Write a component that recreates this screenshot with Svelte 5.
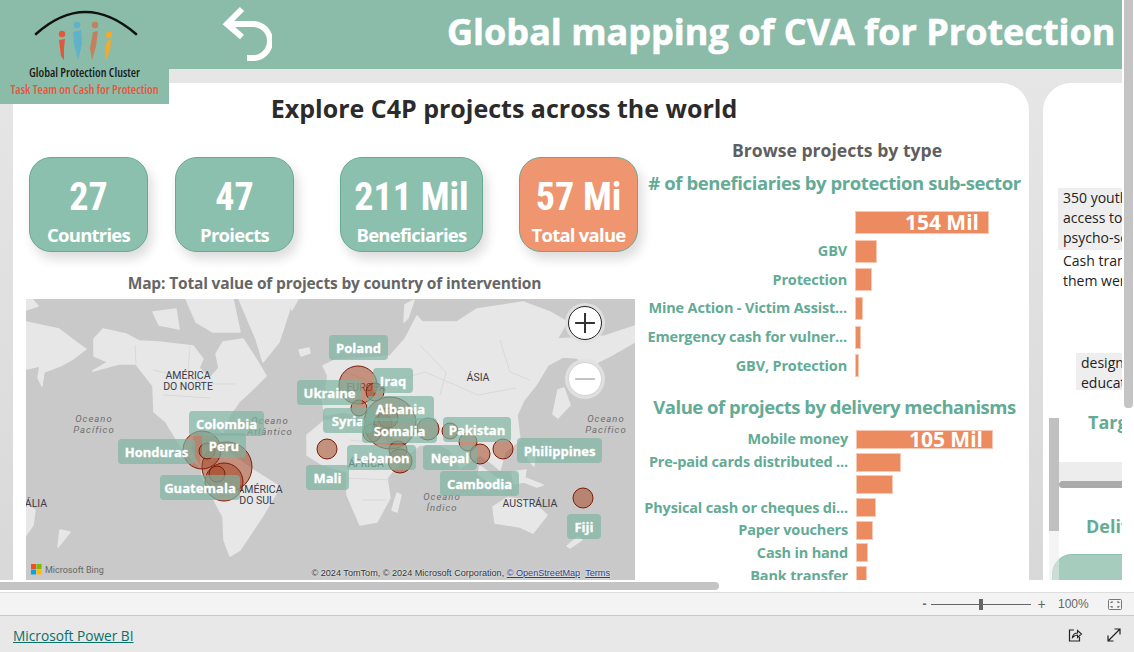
<script>
  const kpis = [
    { value: '27', label: 'Countries', w: 119, ml: 16 },
    { value: '47', label: 'Projects', w: 119, ml: 27, clipped: true },
    { value: '211 Mil', label: 'Beneficiaries', w: 143, ml: 46 },
    { value: '57 Mi', label: 'Total value', w: 119, ml: 36, warm: true }
  ];

  const subSectors = [
    { name: '', w: 132, value: '154 Mil' },
    { name: 'GBV', w: 20 },
    { name: 'Protection', w: 15 },
    { name: 'Mine Action - Victim Assist...', w: 6 },
    { name: 'Emergency cash for vulner...', w: 4 },
    { name: 'GBV, Protection', w: 2 }
  ];

  const mechanisms = [
    { name: 'Mobile money', w: 135, value: '105 Mil' },
    { name: 'Pre-paid cards distributed ...', w: 43 },
    { name: '', w: 35 },
    { name: 'Physical cash or cheques di...', w: 18 },
    { name: 'Paper vouchers', w: 15 },
    { name: 'Cash in hand', w: 10 },
    { name: 'Bank transfer', w: 9 }
  ];

  // page coordinates, the svg viewBox is the map's box
  const bubbles = [
    [227, 467, 25], [202, 450, 19], [207, 451, 8], [224, 482, 19], [217, 474, 8],
    [327, 449, 10], [358, 385, 19], [375, 392, 9], [359, 408, 8], [390, 423, 26],
    [383, 423, 9], [388, 418, 10], [372, 433, 9], [428, 429, 11], [398, 450, 9],
    [400, 461, 12], [450, 431, 8], [468, 442, 9], [480, 454, 10], [503, 449, 10],
    [583, 498, 10]
  ];

  const countries = [
    ['Poland', 329, 335, 59], ['Iraq', 373, 368, 40], ['Ukraine', 297, 380, 65],
    ['Albania', 367, 396, 67], ['Syria', 323, 408, 50], ['Somalia', 362, 418, 75],
    ['Lebanon', 347, 445, 69], ['Nepal', 423, 445, 54], ['Pakistan', 443, 417, 68],
    ['Philippines', 517, 438, 85], ['Cambodia', 440, 471, 79], ['Fiji', 567, 514, 34],
    ['Mali', 306, 465, 43], ['Colombia', 189, 411, 75], ['Peru', 202, 433, 44],
    ['Honduras', 118, 439, 77], ['Guatemala', 160, 475, 80]
  ];

  const places = [
    ['AMÉRICA', 188, 379], ['DO NORTE', 188, 390], ['ÁSIA', 478, 381], ['EUROPA', 366, 391],
    ['ÁFRICA', 366, 467], ['AUSTRÁLIA', 530, 507], ['AMÉRICA', 260, 493], ['DO SUL', 257, 504],
    ['ÁLIA', 36, 507]
  ];

  const oceans = [
    ['Oceano', 94, 422], ['Pacífico', 94, 433], ['Oceano', 270, 424], ['Atlântico', 270, 435],
    ['Oceano', 442, 500], ['Índico', 442, 511], ['Oceano', 606, 422], ['Pacífico', 606, 433]
  ];

  const land = [
    // north america, hudson bay is cut out below
    'M94 339L103 329L126 334L139 341L159 342L193 346L203 359L199 368L210 378L219 368L216 354L223 342L243 339L256 359L266 376L253 389L239 402L229 416L223 433L217 428L193 433L190 450L200 467L183 450L166 422L154 412L153 386L136 364L119 364L93 371L108 362L94 356Z',
    'M153 312L176 309L179 329L159 325Z',
    'M186 299L233 299L240 332L213 332L196 322Z',
    'M239 299L293 299L279 342L263 362L256 339Z',
    'M26 322L59 329L76 342L86 349L73 359L60 366L44 372L42 386L38 378L40 366L26 369Z',
    'M26 299L32 299L38 306L26 310Z',
    'M202 477L200 447L225 450L253 470L280 487L262 517L240 550L230 556L224 540L223 517Z',
    // eurasia
    'M325 415L322 398L336 392L323 366L335 360L353 359L390 356L405 339L417 316L422 322L457 322L477 309L497 306L523 302L550 312L567 322L557 339L605 336L635 326L635 342L610 356L598 362L590 378L582 368L578 358L563 357L548 365L536 385L524 400L517 415L520 440L505 452L500 470L490 462L480 455L460 468L450 450L440 445L420 445L403 458L395 440L385 430L370 420L345 412Z',
    'M307 435L325 420L370 425L385 440L395 460L403 458L387 478L390 498L377 522L360 525L347 495L347 472L323 465L307 455Z',
    'M493 507L507 498L530 500L547 515L533 533L520 527L495 523Z',
    'M397 493L401 495L397 512L392 510Z',
    'M558 390L564 388L570 405L558 418L553 414Z',
    'M523 477L543 485L537 487L524 482Z',
    'M480 466L510 488L500 490L478 474Z',
    'M512 472L526 470L524 482L514 484Z',
    'M530 448L536 452L534 466L528 460Z',
    'M328 374L334 372L336 390L326 390Z',
    'M299 350L309 348L310 353L301 356Z',
    'M26 505L35 510L33 525L26 535Z',
    'M60 530L70 532L58 547Z',
    'M578 537L582 540L570 548L567 546Z',
    'M405 305L414 300L408 318L404 322Z',
    'M290 299L298 299L292 310Z'
  ];

  const borders = 'M135 345L136 364M153 370L215 384L235 384M190 346L188 372M163 395L210 398M345 372L380 385L425 372L478 395L516 388M420 345L446 372L440 395M500 340L510 372L530 380M350 440L394 445M340 478L395 480M362 500L386 500';
</script>

<div class="app">
  <div class="report">
    <header class="banner">
      <div class="logo">
        <svg class="logo-mark" viewBox="0 0 169 62" width="169" height="62">
          <path d="M36 34Q85 -10 136 34" fill="none" stroke="#111" stroke-width="2.6" stroke-linecap="round" />
          <circle cx="62" cy="34" r="3.2" fill="#e2583a" />
          <path d="M59 40L65 39L64 48L64 60L61 56Z" fill="#e2583a" />
          <circle cx="77" cy="25" r="3.2" fill="#5fb2c9" />
          <path d="M73 32L81 30L82 44L78 60L74 44Z" fill="#5fb2c9" />
          <circle cx="95" cy="25" r="3.2" fill="#c47f5e" />
          <path d="M93 32L98 31L96 46L92 60L90 48Z" fill="#c47f5e" />
          <circle cx="109" cy="35" r="3.2" fill="#f5a92c" />
          <path d="M107 41L111 40L110 50L106 60L105 50Z" fill="#f5a92c" />
        </svg>
        <div class="logo-name">Global Protection Cluster</div>
        <div class="logo-team">Task Team on Cash for Protection</div>
      </div>
      <svg class="back" viewBox="0 0 50 60" width="50" height="60">
        <path d="M20 7L5 22L20 35M5 22H31A17 17 0 0 1 31 56H25" fill="none" stroke="#fff" stroke-width="6" />
      </svg>
      <h1>Global mapping of CVA for Protection</h1>
    </header>

    <div class="canvas">
      <section class="page">
        <h2>Explore C4P projects across the world</h2>
        <div class="cols">
          <div class="col-left">
            <div class="kpis">
              {#each kpis as k}
                <div class="kpi" class:warm={k.warm} style="width:{k.w}px;margin-left:{k.ml}px">
                  <div class="kpi-value">{k.value}</div>
                  <div class="kpi-label" class:clipped={k.clipped}>{k.label}</div>
                </div>
              {/each}
            </div>
            <h3 class="map-title">Map: Total value of projects by country of intervention</h3>
            <div class="map">
              <svg viewBox="26 299 609 281" width="609" height="281">
                <rect x="26" y="299" width="609" height="281" fill="#c9c9c9" />
                {#each land as d}
                  <path {d} fill="#e7e7e7" stroke="#e7e7e7" stroke-width="1.5" stroke-linejoin="round" />
                {/each}
                <path d={borders} fill="none" stroke="#d3d3d3" stroke-width="0.7" />
                {#each places as [t, x, y]}
                  <text class="place" x={x} y={y}>{t}</text>
                {/each}
                {#each oceans as [t, x, y]}
                  <text class="ocean" x={x} y={y}>{t}</text>
                {/each}
                {#each bubbles as [cx, cy, r]}
                  <circle {cx} {cy} {r} fill="#a84a2a" fill-opacity="0.55" stroke="#7a1c08" stroke-width="1" />
                {/each}
              </svg>
              {#each countries as [name, x, y, w]}
                <div class="tag" style="left:{x - 26}px;top:{y - 299}px;width:{w}px">{name}</div>
              {/each}
              <button class="zoom-btn in" aria-label="Zoom in">
                <svg viewBox="0 0 20 20" width="22" height="22"><path d="M10 1V19M1 10H19" stroke="#333" stroke-width="1.8" /></svg>
              </button>
              <button class="zoom-btn out" aria-label="Zoom out">
                <svg viewBox="0 0 20 20" width="22" height="22"><path d="M1 10H19" stroke="#c4c4c4" stroke-width="1.8" /></svg>
              </button>
              <div class="bing">
                <svg viewBox="0 0 11 11" width="11" height="11">
                  <rect width="5" height="5" fill="#f25022" /><rect x="5.5" width="5" height="5" fill="#7fba00" />
                  <rect y="5.5" width="5" height="5" fill="#00a4ef" /><rect x="5.5" y="5.5" width="5" height="5" fill="#ffb900" />
                </svg>
                Microsoft Bing
              </div>
              <div class="attrib">© 2024 TomTom, © 2024 Microsoft Corporation, <u>© OpenStreetMap</u> &nbsp;<u>Terms</u></div>
            </div>
          </div>

          <div class="col-right">
            <h3 class="browse">Browse projects by type</h3>
            <h3 class="chart-title">&#35; of beneficiaries by protection sub-sector</h3>
            <div class="chart sub">
              {#each subSectors as b}
                <div class="row">
                  <span class="row-name">{b.name}</span>
                  <span class="bar" style="width:{b.w}px">{#if b.value}<span class="bar-value">{b.value}</span>{/if}</span>
                </div>
              {/each}
            </div>
            <h3 class="chart-title second">Value of projects by delivery mechanisms</h3>
            <div class="chart mech">
              {#each mechanisms as b}
                <div class="row">
                  <span class="row-name">{b.name}</span>
                  <span class="bar" style="width:{b.w}px">{#if b.value}<span class="bar-value">{b.value}</span>{/if}</span>
                </div>
              {/each}
            </div>
          </div>
        </div>
      </section>

      <section class="page-two">
        <div class="para shaded">350 youth<br />access to<br />psycho-social</div>
        <div class="para">Cash transfer<br />them were</div>
        <div class="para shaded inset">design<br />education</div>
        <div class="side-head target">Target</div>
        <div class="inner-band"></div>
        <div class="inner-bar"></div>
        <div class="side-head deliv">Delivery</div>
        <div class="inner-card"></div>
        <div class="inner-track"><div class="inner-thumb"></div></div>
      </section>
    </div>

    <div class="vscroll"></div>
    <div class="hscroll"><div class="hthumb"></div></div>
  </div>

  <div class="zoombar">
    <span class="z-sign">-</span>
    <span class="slider"><span class="thumb"></span></span>
    <span class="z-sign plus">+</span>
    <span class="z-pct">100%</span>
    <svg viewBox="0 0 14 11" width="14" height="11">
      <rect x="0.5" y="0.5" width="13" height="10" rx="1" fill="none" stroke="#777" />
      <path d="M3 4V3H5M9 3H11V4M11 7V8H9M5 8H3V7" fill="none" stroke="#555" />
    </svg>
  </div>

  <footer class="foot">
    <span class="pbi">Microsoft Power BI</span>
    <span class="foot-icons">
      <svg viewBox="0 0 16 16" width="16" height="16">
        <path d="M7 3H2.5V14H12.5V10" fill="none" stroke="#222" stroke-width="1.2" />
        <path d="M5.5 10.5C6 7.5 8 6 10.5 6V3.5L14.5 7L10.5 10.5V8C8.5 8 7 9 5.5 10.5Z" fill="none" stroke="#222" stroke-width="1.1" />
      </svg>
      <svg viewBox="0 0 16 16" width="16" height="16">
        <path d="M2 14L14 2M8.5 2H14V7.5M2 8.5V14H7.5" fill="none" stroke="#222" stroke-width="1.2" />
      </svg>
    </span>
  </footer>
</div>

<style>
  :global(body) {
    margin: 0;
    overflow: hidden;
  }

  .app {
    width: 1134px;
    height: 652px;
    display: flex;
    flex-direction: column;
    font-family: "Open Sans", "Noto Sans", sans-serif;
  }

  .report {
    position: relative;
    height: 592px;
    overflow: hidden;
    background: #e4e4e4;
  }

  .report::after {
    content: "";
    position: absolute;
    right: 0;
    top: 0;
    width: 12px;
    height: 592px;
    background: #fff;
  }

  .banner {
    position: relative;
    height: 69px;
    display: flex;
    background: #8abca9;
  }

  .logo {
    position: absolute;
    z-index: 2;
    left: 0;
    top: 0;
    width: 169px;
    height: 104px;
    background: #8abca9;
    text-align: center;
  }

  .logo-mark {
    display: block;
  }

  .logo-name {
    margin-top: 4px;
    font-size: 12.2px;
    line-height: 14px;
    font-weight: 600;
    font-stretch: 80%;
    color: #1a1a1a;
    white-space: nowrap;
  }

  .logo-team {
    margin-top: 2px;
    font-size: 12.3px;
    line-height: 15px;
    font-weight: 600;
    font-stretch: 80%;
    color: #e8553b;
    white-space: nowrap;
  }

  .back {
    margin: 2px 0 0 222px;
    flex: none;
  }

  h1 {
    margin: 0 0 0 175px;
    font-size: 36px;
    line-height: 64px;
    font-weight: 700;
    -webkit-text-stroke: 0.6px #fff;
    color: #fff;
    white-space: nowrap;
  }

  .canvas {
    display: flex;
    gap: 14px;
    padding: 14px 0 0 13px;
    background: linear-gradient(#e6e6e6, #d8d8d8);
  }

  .page {
    flex: none;
    width: 1016px;
    height: 509px;
    background: #fff;
    border-radius: 0 28px 0 0;
  }

  h2 {
    margin: 0;
    height: 52px;
    padding: 8px 34px 0 0;
    box-sizing: border-box;
    font-size: 25px;
    line-height: 34px;
    font-weight: 700;
    color: #2b2b2b;
    text-align: center;
  }

  .cols {
    display: flex;
  }

  .col-left {
    flex: none;
    width: 627px;
  }

  .kpis {
    display: flex;
    margin-top: 22px;
  }

  .kpi {
    box-sizing: border-box;
    height: 95px;
    border: 1px solid #69a994;
    border-radius: 22px;
    background: #8cc0ae;
    box-shadow: 4px 7px 12px rgba(0, 0, 0, 0.14);
    color: #fff;
    text-align: center;
    overflow: hidden;
    white-space: nowrap;
  }

  .kpi.warm {
    background: #ef9670;
  }

  .kpi-value {
    margin-top: 18px;
    font-family: "Liberation Sans Narrow", "Roboto", sans-serif;
    font-stretch: 75%;
    font-size: 38px;
    line-height: 42px;
    font-weight: 700;
  }

  .kpi-label {
    margin-top: 5px;
    font-size: 18.5px;
    line-height: 23px;
    font-weight: 700;
    letter-spacing: -0.75px;
  }

  .kpi-label.clipped {
    height: 19px;
    overflow: hidden;
  }

  .map-title {
    margin: 21px 0 6px;
    height: 20px;
    font-size: 15.5px;
    line-height: 20px;
    font-weight: 700;
    letter-spacing: -0.16px;
    color: #666;
    text-align: center;
    padding-left: 16px;
  }

  .map {
    position: relative;
    margin-left: 13px;
    width: 609px;
    height: 281px;
    overflow: hidden;
  }

  .map svg {
    display: block;
  }

  .place {
    font-family: Roboto, sans-serif;
    font-size: 10.5px;
    fill: #3c3c4a;
    text-anchor: middle;
  }

  .ocean {
    font-family: Roboto, sans-serif;
    font-size: 9.5px;
    font-style: italic;
    letter-spacing: 1px;
    fill: #6e6e6e;
    text-anchor: middle;
  }

  .tag {
    position: absolute;
    height: 25px;
    border-radius: 4px;
    background: rgba(124, 178, 160, 0.68);
    color: #fff;
    font-size: 13px;
    line-height: 26px;
    font-weight: 700;
    -webkit-text-stroke: 0.3px #fff;
    text-align: center;
    white-space: nowrap;
  }

  .zoom-btn {
    position: absolute;
    left: 542px;
    width: 34px;
    height: 34px;
    padding: 0;
    display: flex;
    align-items: center;
    justify-content: center;
    border-radius: 50%;
    background: #fff;
    box-shadow: 0 0 0 3px rgba(225, 225, 225, 0.9);
  }

  .zoom-btn.in {
    top: 7px;
    border: 1.5px solid #222;
  }

  .zoom-btn.out {
    top: 63px;
    border: 1.5px solid #d4d4d4;
  }

  .bing {
    position: absolute;
    left: 5px;
    bottom: 5px;
    display: flex;
    align-items: center;
    gap: 3px;
    font-family: Roboto, sans-serif;
    font-size: 9px;
    color: #666;
  }

  .attrib {
    position: absolute;
    right: 25px;
    bottom: 1px;
    font-family: "Liberation Sans", sans-serif;
    font-size: 9.1px;
    line-height: 12px;
    color: #333;
    text-shadow: 0 0 2px #fff;
    white-space: nowrap;
  }

  .attrib u {
    color: #2b3f8c;
  }

  .col-right {
    flex: none;
    width: 389px;
    margin-top: 1px;
  }

  .browse {
    margin: 0;
    height: 28px;
    font-size: 17.6px;
    line-height: 28px;
    font-weight: 700;
    color: #5f5f5f;
    text-align: center;
    padding-left: 5px;
  }

  .chart-title {
    margin: 5px 0 0;
    height: 27px;
    font-size: 18.5px;
    line-height: 27px;
    font-weight: 700;
    letter-spacing: -0.4px;
    color: #63ab95;
    text-align: center;
    white-space: nowrap;
  }

  .chart-title.second {
    margin-top: 13px;
    letter-spacing: -0.5px;
  }

  .chart.sub {
    margin-top: 12px;
  }

  .chart.mech {
    margin-top: 8px;
    height: 159px;
    overflow: hidden;
  }

  .row {
    display: flex;
    align-items: center;
    gap: 9px;
  }

  .sub .row {
    height: 28.7px;
  }

  .sub .bar {
    height: 21px;
  }

  .mech .row {
    height: 22.7px;
  }

  .mech .row-name {
    width: 208px;
  }

  .mech .bar {
    height: 17px;
  }

  .row-name {
    flex: none;
    width: 207px;
    margin-bottom: 1px;
    text-align: right;
    font-size: 14.5px;
    font-weight: 700;
    letter-spacing: -0.17px;
    color: #63ab95;
    white-space: nowrap;
  }

  .bar {
    position: relative;
    flex: none;
    display: block;
    background: #ec8b60;
    box-shadow: 0 0 0 1px #f7c9b2;
  }

  .bar-value {
    position: absolute;
    right: 9px;
    top: 50%;
    transform: translateY(-50%);
    font-size: 21px;
    line-height: 20px;
    font-weight: 700;
    color: #fff;
    white-space: nowrap;
  }

  .page-two {
    position: relative;
    flex: none;
    width: 79px;
    height: 509px;
    background: #fff;
    border-radius: 28px 0 0 0;
    overflow: hidden;
    color: #222;
    font-size: 14px;
    line-height: 20px;
  }

  .para {
    position: absolute;
    left: 15px;
    top: 168px;
    white-space: nowrap;
    padding-left: 5px;
  }

  .para.shaded {
    top: 105px;
    width: 70px;
    height: 62px;
    background: #eeeeee;
  }

  .para.inset {
    left: 33px;
    top: 270px;
    width: 50px;
    height: 37px;
    overflow: hidden;
  }

  .side-head {
    position: absolute;
    font-size: 18px;
    line-height: 24px;
    font-weight: 700;
    color: #63ab95;
    white-space: nowrap;
  }

  .side-head.target {
    left: 45px;
    top: 327px;
  }

  .side-head.deliv {
    left: 43px;
    top: 431px;
  }

  .inner-band {
    position: absolute;
    left: 16px;
    top: 379px;
    width: 70px;
    height: 19px;
    background: #ededed;
  }

  .inner-bar {
    position: absolute;
    left: 16px;
    top: 398px;
    width: 70px;
    height: 7px;
    border-radius: 4px;
    background: #ababab;
  }

  .inner-card {
    position: absolute;
    left: 9px;
    top: 471px;
    width: 90px;
    height: 60px;
    box-sizing: border-box;
    border: 1px solid #8cc0ae;
    border-radius: 20px;
    background: #a6ccbe;
  }

  .inner-track {
    position: absolute;
    left: 6px;
    top: 335px;
    width: 10px;
    height: 174px;
    background: rgba(235, 235, 235, 0.55);
  }

  .inner-thumb {
    height: 113px;
    background: #c0c0c0;
  }

  .vscroll {
    position: absolute;
    z-index: 3;
    right: 1px;
    top: 0;
    width: 9px;
    height: 408px;
    border-radius: 0 0 4px 4px;
    background: #c4c4c4;
  }

  .hscroll {
    position: absolute;
    z-index: 3;
    left: 0;
    bottom: 0;
    width: 100%;
    height: 12px;
    background: #fff;
  }

  .hthumb {
    width: 719px;
    height: 8px;
    margin-top: 2px;
    border-radius: 0 4px 4px 0;
    background: #c4c4c4;
  }

  .zoombar {
    box-sizing: border-box;
    height: 24px;
    display: flex;
    align-items: center;
    padding-left: 920px;
    background: #f3f3f3;
    border-top: 1px solid #dddddd;
    border-bottom: 1px solid #c9c9c9;
    color: #666;
    font-family: "Liberation Sans", sans-serif;
    font-size: 12px;
  }

  .z-sign {
    width: 9px;
    text-align: center;
    font-weight: 700;
  }

  .z-sign.plus {
    margin-left: 6px;
    font-size: 14px;
    font-weight: 400;
  }

  .slider {
    position: relative;
    width: 100px;
    height: 1px;
    margin-left: 2px;
    background: #666;
  }

  .thumb {
    position: absolute;
    left: 48px;
    top: -5px;
    width: 4px;
    height: 11px;
    background: #666;
  }

  .z-pct {
    margin: 0 19px 0 12px;
  }

  .foot {
    flex: 1;
    display: flex;
    align-items: center;
    justify-content: space-between;
    padding: 2px 12px 0 13px;
    background: #e8e8e8;
  }

  .pbi {
    font-family: "Open Sans", sans-serif;
    font-size: 13.7px;
    color: #0b6f6a;
    text-decoration: underline;
  }

  .foot-icons {
    display: flex;
    gap: 23px;
  }
</style>
